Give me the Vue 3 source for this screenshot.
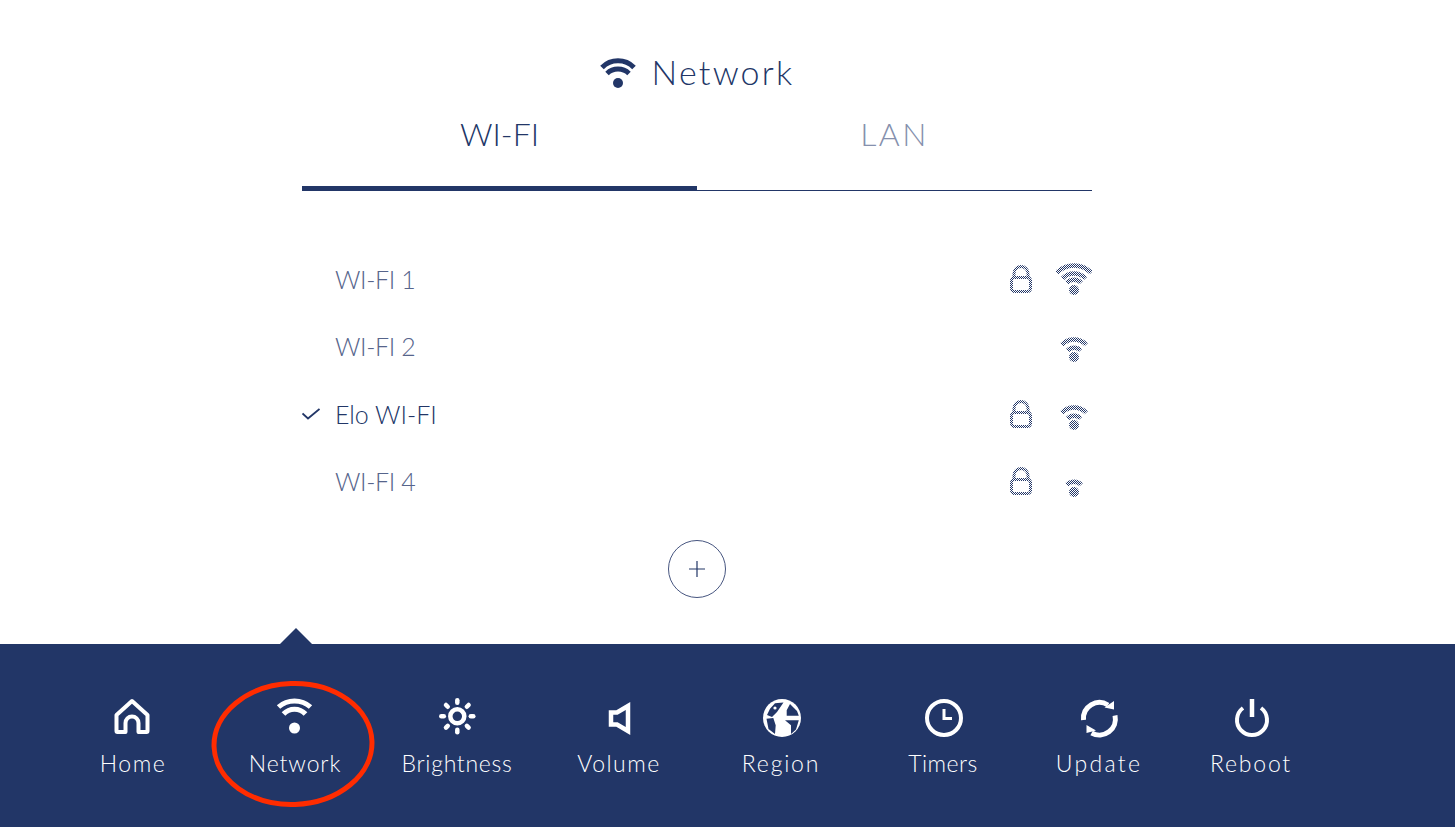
<script setup>
const networks = [
  { name: 'WI-FI 1', lock: true, arcs: [24, 16, 10], active: false },
  { name: 'WI-FI 2', lock: false, arcs: [17, 9], active: false },
  { name: 'Elo WI-FI', lock: true, arcs: [17, 9], active: true },
  { name: 'WI-FI 4', lock: true, arcs: [10], active: false },
]
function arc(r) {
  const d = r * 0.72
  return `M${18 - d} ${29 - d}A${r} ${r} 0 0 1 ${18 + d} ${29 - d}`
}
const nav = [
  { label: 'Home', spacing: 1.5 },
  { label: 'Network', spacing: 0.9 },
  { label: 'Brightness', spacing: 0.7 },
  { label: 'Volume', spacing: 1.5 },
  { label: 'Region', spacing: 1.8 },
  { label: 'Timers', spacing: 0.5 },
  { label: 'Update', spacing: 2.3 },
  { label: 'Reboot', spacing: 1.8 },
]
const rays = [0, 45, 90, 135, 180, 225, 270, 315]
</script>

<template>
  <div class="page">
    <svg class="defs" width="0" height="0" aria-hidden="true">
      <defs>
        <pattern id="dither" width="2" height="2" patternUnits="userSpaceOnUse">
          <rect width="1" height="1" fill="#223667" />
          <rect x="1" y="1" width="1" height="1" fill="#223667" />
        </pattern>
      </defs>
    </svg>

    <main class="content">
      <h1 class="title">
        <svg class="title-icon" width="36" height="32" viewBox="0 0 36 32" fill="none" stroke="#223667" stroke-width="5">
          <path d="M2 10.5A22.5 22.5 0 0 1 34 10.5" />
          <path d="M7 16.5A16 16 0 0 1 29 16.5" />
          <circle cx="18" cy="26" r="5" fill="#223667" stroke="none" />
        </svg>
        <span>Network</span>
      </h1>

      <div class="tabs">
        <div class="tab active">WI-FI</div>
        <div class="tab">LAN</div>
      </div>

      <ul class="list">
        <li v-for="n in networks" :key="n.name" class="row" :class="{ current: n.active }">
          <span class="check">
            <svg v-if="n.active" width="18" height="12" viewBox="0 0 18 12" fill="none" stroke="#223667" stroke-width="1.8">
              <path d="M0.5 5.5L6 10.5L17.5 1" />
            </svg>
          </span>
          <span class="name">{{ n.name }}</span>
          <span class="lock">
            <svg v-if="n.lock" width="22" height="28" viewBox="0 0 22 28" fill="none" stroke="url(#dither)" stroke-width="3">
              <path d="M4 13V8.500A7 7 0 0 1 18 8.500V13" />
              <rect x="1.500" y="12.500" width="19" height="14" rx="3" />
            </svg>
          </span>
          <svg class="signal" width="36" height="36" viewBox="0 0 36 36" fill="none" stroke="url(#dither)" stroke-width="4.500">
            <path v-for="r in n.arcs" :key="r" :d="arc(r)" />
            <circle cx="18" cy="29" r="5" fill="url(#dither)" stroke="none" />
          </svg>
        </li>
      </ul>

      <button class="add" type="button" aria-label="Add network">
        <svg width="16" height="18" viewBox="0 0 16 18" fill="none" stroke="#223667" stroke-width="1.200">
          <path d="M0 9H16M8 1V17" />
        </svg>
      </button>
    </main>

    <nav class="nav">
      <div v-for="(item, i) in nav" :key="item.label" class="nav-item">
        <span v-if="i === 1" class="pointer"></span>
        <svg v-if="i === 1" class="circle" width="170" height="130" viewBox="0 0 170 130" fill="none" aria-hidden="true">
          <ellipse cx="85" cy="65" rx="79" ry="60.500" stroke="#ff2c00" stroke-width="5" transform="rotate(-2 85 65)" />
        </svg>

        <svg class="nav-icon" width="44" height="44" viewBox="0 0 44 44" fill="none" stroke="#fff" stroke-width="4">
          <template v-if="i === 0">
            <path d="M5.500 19L21 5L36.500 19V35A1 1 0 0 1 35.500 36H27.500V27A6.500 6.500 0 0 0 14.500 27V36H6.500A1 1 0 0 1 5.500 35Z" stroke-linejoin="round" />
          </template>
          <template v-else-if="i === 1">
            <path d="M5.500 11A24 24 0 0 1 37.500 11" stroke-width="5" />
            <path d="M10.500 18A15 15 0 0 1 32.500 18" stroke-width="5" />
            <circle cx="21.500" cy="32" r="5.500" fill="#fff" stroke="none" />
          </template>
          <template v-else-if="i === 2">
            <circle cx="22.300" cy="20.300" r="7" stroke-width="4.500" />
            <path v-for="a in rays" :key="a" d="M22.300 4.300V6.800" stroke-width="4.500" stroke-linecap="round" :transform="`rotate(${a} 22.300 20.300)`" />
          </template>
          <template v-else-if="i === 3">
            <path d="M31 10L20 16.500H14V28.500H20L31 35Z" stroke-width="4.500" />
          </template>
          <template v-else-if="i === 4">
            <circle cx="23" cy="22" r="19" fill="#fff" stroke="none" />
            <path d="M11 12.700L16 7.300L24.500 6.500L18 16L13 21L8 19ZM7.500 22.700L14.300 22L16.700 29.300L16 38L9.500 33ZM27.700 14.300L31 8L38 15L39.800 19.800L27.700 19.800ZM26 24.300L39.800 24.300L37 33.500L32 38L32 29.300Z" fill="#223667" stroke="none" />
            <circle cx="16" cy="12" r="1.600" fill="#fff" stroke="none" />
          </template>
          <template v-else-if="i === 5">
            <circle cx="23" cy="22" r="17" />
            <path d="M23 13V22.500H31" stroke-width="3" />
          </template>
          <template v-else-if="i === 6">
            <path d="M6.500 24A16 16 0 0 1 31 9" stroke-width="5" />
            <path d="M38 19.500A16 16 0 0 1 14.600 37" stroke-width="5" />
            <path d="M37 5L37 13.500L27.500 11.500Z" fill="#fff" stroke="none" />
            <path d="M9.500 29L9.500 37L19 34.500Z" fill="#fff" stroke="none" />
          </template>
          <template v-else>
            <path d="M14 12A15 15 0 1 0 32 12" />
            <path d="M23 3V21" stroke-width="4.500" />
          </template>
        </svg>
        <span class="nav-label" :style="{ letterSpacing: item.spacing + 'px' }">{{ item.label }}</span>
      </div>
    </nav>
  </div>
</template>

<style scoped>
.page {
  width: 1455px;
  height: 827px;
  display: flex;
  flex-direction: column;
  background: #fff;
  overflow: hidden;
  font-family: Lato, "Liberation Sans", sans-serif;
  font-weight: 300;
  color: #223667;
}
.defs {
  position: absolute;
}
.content {
  height: 644px;
  width: 790px;
  margin-left: 302px;
  display: flex;
  flex-direction: column;
}
.title {
  margin: 0;
  padding-top: 50px;
  height: 44px;
  display: flex;
  align-items: center;
  justify-content: center;
  gap: 16px;
  font-size: 34px;
  font-weight: 300;
  letter-spacing: 2.2px;
  line-height: 44px;
}
.title-icon {
  margin-top: 1px;
}
.tabs {
  display: flex;
  margin-top: 6px;
}
.tab {
  flex: 1;
  height: 91px;
  box-sizing: border-box;
  padding-top: 14px;
  text-align: center;
  font-size: 32px;
  line-height: 40px;
  letter-spacing: 2.4px;
  color: #8590ad;
  border-bottom: 1px solid #223667;
}
.tab.active {
  color: #223667;
  border-bottom: 5px solid #223667;
  letter-spacing: 0;
}
.list {
  list-style: none;
  margin: 54px 0 0;
  padding: 0;
}
.row {
  height: 67.500px;
  display: flex;
  align-items: center;
  font-size: 25px;
  letter-spacing: -0.400px;
  color: #56648b;
}
.row.current {
  color: #223667;
  letter-spacing: 0;
}
.check {
  width: 33px;
  margin-right: 1px;
  display: flex;
}
.name {
  flex: 1;
  margin-left: -1px;
}
.lock {
  width: 22px;
  height: 28px;
  margin-right: 24px;
}
.add {
  width: 58px;
  height: 58px;
  margin: 25px auto 0;
  padding: 0;
  border: 1px solid #46557f;
  border-radius: 50%;
  background: none;
  display: flex;
  align-items: center;
  justify-content: center;
}
.nav {
  height: 183px;
  box-sizing: border-box;
  background: #223667;
  padding: 52px 0 0 52px;
  display: grid;
  grid-template-columns: repeat(6, 162px) 150px 154px;
  align-items: start;
  color: #fff;
}
.nav-item {
  position: relative;
  display: flex;
  flex-direction: column;
  align-items: center;
}
.nav-icon {
  display: block;
}
.nav-label {
  margin-top: 8px;
  font-size: 23px;
  line-height: 30px;
  white-space: nowrap;
}
.pointer {
  position: absolute;
  left: 66px;
  top: -68px;
  width: 0;
  height: 0;
  border-left: 16px solid transparent;
  border-right: 16px solid transparent;
  border-bottom: 16px solid #223667;
}
.circle {
  position: absolute;
  left: -6.500px;
  top: -17px;
}
</style>
